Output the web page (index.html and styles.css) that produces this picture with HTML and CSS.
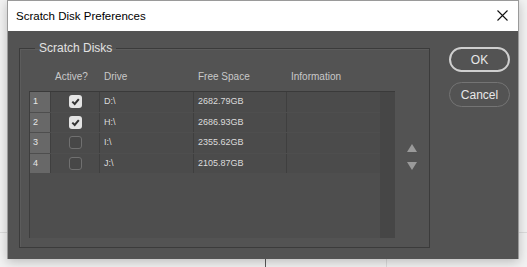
FILE: index.html
```html
<!DOCTYPE html>
<html lang="en">
<head>
  <meta charset="UTF-8">
  <title>Scratch Disk Preferences</title>
  <link rel="stylesheet" href="styles.css">
</head>
<body>
  <div class="dialog">
    <div class="titlebar">
      <span class="title">Scratch Disk Preferences</span>
      <svg class="close" width="11" height="11" viewBox="0 0 11 11">
        <path d="M0.5 0.5 L10.5 10.5 M10.5 0.5 L0.5 10.5" stroke="#111" stroke-width="1.1" fill="none"/>
      </svg>
    </div>

    <div class="dialog-body">
      <fieldset class="disks">
        <legend>Scratch Disks</legend>

        <div class="disk-area">
          <div class="disk-list">
            <div class="head-row">
              <span></span>
              <span>Active?</span>
              <span>Drive</span>
              <span>Free Space</span>
              <span>Information</span>
            </div>

            <div class="table">
              <div class="rows">
                <div class="row">
                  <span class="num">1</span>
                  <span class="chk"><span class="box checked"></span></span>
                  <span>D:\</span>
                  <span>2682.79GB</span>
                  <span></span>
                </div>
                <div class="row">
                  <span class="num">2</span>
                  <span class="chk"><span class="box checked"></span></span>
                  <span>H:\</span>
                  <span>2686.93GB</span>
                  <span></span>
                </div>
                <div class="row">
                  <span class="num">3</span>
                  <span class="chk"><span class="box"></span></span>
                  <span>I:\</span>
                  <span>2355.62GB</span>
                  <span></span>
                </div>
                <div class="row">
                  <span class="num">4</span>
                  <span class="chk"><span class="box"></span></span>
                  <span>J:\</span>
                  <span>2105.87GB</span>
                  <span></span>
                </div>
              </div>
              <div class="scrollbar"></div>
            </div>
          </div>

          <div class="order">
            <span class="arrow up"></span>
            <span class="arrow down"></span>
          </div>
        </div>
      </fieldset>

      <div class="buttons">
        <button class="btn primary">OK</button>
        <button class="btn">Cancel</button>
      </div>
    </div>
  </div>
</body>
</html>
```

FILE: styles.css
```css
body {
  margin: 0;
  padding: 0 0 0 7px;
  height: 267px;
  overflow: hidden;
  font-family: "Liberation Sans", Arial, sans-serif;
  background-color: #f2f2f2;
  background-image:
    linear-gradient(#5a5a5a, #5a5a5a),
    linear-gradient(#dcdcdc, #dcdcdc),
    linear-gradient(#dcdcdc, #dcdcdc);
  background-size: 1px 100%, 100% 1px, 1px 100%;
  background-position: 265px 0, 0 232px, 386px 0;
  background-repeat: no-repeat;
}

.dialog {
  width: 510px;
  border: 1px solid #9a9a9a;
  border-bottom: none;
  background: #535353;
  box-shadow: 0 3px 10px rgba(0, 0, 0, 0.22);
}

.titlebar {
  height: 30px;
  background: #fff;
  display: flex;
  align-items: center;
  justify-content: space-between;
  padding: 0 10px 0 8px;
}

.title {
  font-size: 11.5px;
  color: #000;
  line-height: 30px;
}

.close {
  margin-top: -1px;
}

.dialog-body {
  height: 228px;
  display: flex;
  align-items: flex-start;
  padding: 10px 0 0 11px;
  box-sizing: border-box;
}

.disks {
  margin: 0;
  width: 410px;
  height: 207px;
  box-sizing: border-box;
  padding: 12px 0 0 9px;
  border: 1px solid #3b3b3b;
  box-shadow: inset 1px 1px 0 #5c5c5c;
}

.disks legend {
  margin-left: 6px;
  padding: 0 4px;
  font-size: 12px;
  line-height: 14px;
  color: #e2e2e2;
}

.disk-area {
  display: flex;
}

.head-row {
  display: grid;
  grid-template-columns: 21px 49px 94px 93px 93px;
  height: 24px;
  font-size: 10px;
  line-height: 20px;
  color: #c9c9c9;
}

.head-row span {
  padding-left: 5px;
}

.table {
  display: flex;
  width: 365px;
  height: 146px;
  border-left: 1px solid #3e3e3e;
  border-top: 1px solid #3a3a3a;
  background: #4e4e4e;
}

.rows {
  display: flex;
  flex-direction: column;
  gap: 1px;
  width: 350px;
}

.row {
  display: grid;
  grid-template-columns: 20px 48px 93px 92px 93px;
  gap: 1px;
  height: 19.5px;
  background: #3f3f3f;
  font-size: 9px;
  color: #dcdcdc;
}

.row span {
  background: #4b4b4b;
  line-height: 19.5px;
  padding-left: 4px;
}

.row .num {
  background: #686868;
  padding-left: 3px;
  color: #e6e6e6;
}

.row .chk {
  display: flex;
  align-items: center;
  justify-content: center;
  padding: 0;
}

.box {
  display: block;
  width: 13px;
  height: 13px;
  padding: 0;
  box-sizing: border-box;
  border-radius: 3px;
  border: 1px solid #707070;
  background: #474747;
}

.row .box {
  padding: 0;
  background: #474747;
}

.row .box.checked {
  border: none;
  background: #e4e4e4 url("data:image/svg+xml;utf8,<svg xmlns='http://www.w3.org/2000/svg' width='13' height='13'><path d='M3.3 6.6 L5.7 9 L9.8 4.2' stroke='%23333' stroke-width='2' fill='none'/></svg>") no-repeat center;
}

.scrollbar {
  flex: 1;
  background: #464646;
}

.order {
  width: 34px;
  display: flex;
  flex-direction: column;
  align-items: center;
  gap: 10px;
  padding-top: 77px;
}

.arrow {
  width: 0;
  height: 0;
  border-left: 5px solid transparent;
  border-right: 5px solid transparent;
}

.arrow.up {
  border-bottom: 8px solid #9a9a9a;
}

.arrow.down {
  border-top: 8px solid #9a9a9a;
}

.buttons {
  display: flex;
  flex-direction: column;
  gap: 10px;
  margin-left: 19px;
  padding-top: 6px;
}

.btn {
  width: 61px;
  height: 25px;
  border: 1px solid #747474;
  border-radius: 13px;
  background: #535353;
  color: #e8e8e8;
  font-family: "Liberation Sans", Arial, sans-serif;
  font-size: 12px;
  padding: 0;
}

.btn.primary {
  border: 2px solid #cfcfcf;
}
```
